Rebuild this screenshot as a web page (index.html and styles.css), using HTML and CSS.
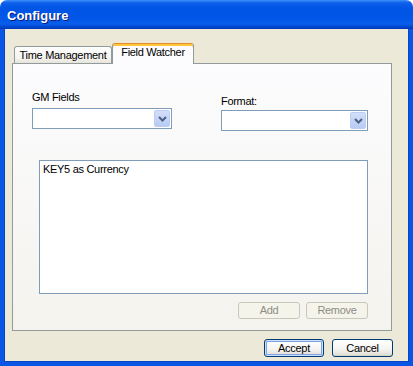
FILE: index.html
```html
<!DOCTYPE html>
<html lang="en">
<head>
  <meta charset="UTF-8" />
  <meta name="viewport" content="width=device-width, initial-scale=1.0" />
  <title>Configure</title>
  <link rel="stylesheet" href="styles.css">
</head>
<body>
  <div class="window">
    <div class="titlebar">Configure</div>
    <div class="client">
      <div class="tabs">
        <div class="tab">Time Management</div>
        <div class="tab tab-active">Field Watcher</div>
      </div>
      <div class="panel">
        <div class="fields">
          <div class="field field-gm">
            <label>GM Fields</label>
            <div class="combo">
              <span class="combo-value"></span>
              <span class="combo-btn">
                <svg width="9" height="6" viewBox="0 0 9 6"><path d="M1 1 L4.5 4.5 L8 1" fill="none" stroke="#4d6185" stroke-width="2"/></svg>
              </span>
            </div>
          </div>
          <div class="field field-format">
            <label>Format:</label>
            <div class="combo">
              <span class="combo-value"></span>
              <span class="combo-btn">
                <svg width="9" height="6" viewBox="0 0 9 6"><path d="M1 1 L4.5 4.5 L8 1" fill="none" stroke="#4d6185" stroke-width="2"/></svg>
              </span>
            </div>
          </div>
        </div>
        <div class="listbox">
          <div class="item">KEY5 as Currency</div>
        </div>
        <div class="list-actions">
          <button class="btn" disabled>Add</button>
          <button class="btn" disabled>Remove</button>
        </div>
      </div>
      <div class="dialog-actions">
        <button class="btn btn-default btn-accept">Accept</button>
        <button class="btn btn-cancel">Cancel</button>
      </div>
    </div>
  </div>
</body>
</html>
```

FILE: styles.css
```css
* {
  box-sizing: border-box;
}
body {
  margin: 0;
  background-color: #fff;
}
.window {
  width: 413px;
  height: 366px;
  font-family: "Liberation Sans", Arial, sans-serif;
  font-size: 11px;
  letter-spacing: -0.3px;
  color: #000;
}
.titlebar {
  height: 29px;
  padding: 3px 0 0 7px;
  line-height: 26px;
  border-radius: 7px 7px 0 0;
  background: linear-gradient(#3d8ef9 0, #0d5fe9 3px, #0055e5 8px, #0256e8 19px, #0a5eeb 24px, #0046cf 27px, #0038b4 29px);
  color: #fff;
  font-size: 13px;
  font-weight: bold;
  letter-spacing: 0;
  text-shadow: 1px 1px 0 #0a1a7a;
}
.client {
  height: 337px;
  padding: 14px 0 0 8px;
  background-color: #ece9d8;
  border: 4px solid #0a56e4;
  border-top: 0;
  box-shadow: inset 1px 0 0 #0843c8, inset -1px 0 0 #0843c8, inset 0 -1px 0 #0843c8;
  display: flex;
  flex-direction: column;
}
.tabs {
  display: flex;
  align-items: flex-end;
  height: 20px;
  margin-left: 2px;
}
.tab {
  width: 98px;
  height: 17px;
  padding-top: 2px;
  line-height: 13px;
  text-align: center;
  border: 1px solid #919b9c;
  border-bottom: 0;
  border-radius: 3px 3px 0 0;
  background: linear-gradient(#fefefe, #f4f3ee 70%, #e6e4da);
}
.tab-active {
  width: 82px;
  height: 21px;
  margin-bottom: -1px;
  padding-top: 2px;
  border-top: 1px solid #e68b2c;
  background: #fcfcfe;
  box-shadow: inset 0 2px 0 #ffc73c;
  position: relative;
  z-index: 1;
}
.panel {
  width: 380px;
  height: 268px;
  border: 1px solid #919b9c;
  background: linear-gradient(#fcfcfe, #f4f3ee);
}
.fields {
  display: flex;
  padding-left: 19px;
}
.field label {
  display: block;
  line-height: 13px;
}
.field-gm {
  width: 140px;
  padding-top: 27px;
}
.field-gm label {
  margin-bottom: 4px;
}
.field-format {
  width: 147px;
  margin-left: 49px;
  padding-top: 31px;
}
.field-format label {
  margin-bottom: 2px;
}
.combo {
  height: 21px;
  padding: 1px;
  display: flex;
  border: 1px solid #7f9db9;
  background-color: #fff;
}
.combo-value {
  flex: 1;
}
.combo-btn {
  width: 16px;
  height: 17px;
  display: flex;
  align-items: center;
  justify-content: center;
  border: 1px solid #bccdf4;
  border-radius: 2px;
  background: linear-gradient(#d3def9, #b8cbf5);
}
.listbox {
  width: 329px;
  height: 134px;
  margin: 29px 0 0 26px;
  padding: 2px 3px;
  line-height: 13px;
  border: 1px solid #7f9db9;
  background-color: #fff;
}
.list-actions {
  width: 329px;
  margin: 8px 0 0 26px;
  display: flex;
  justify-content: flex-end;
  gap: 6px;
}
.btn {
  height: 17px;
  width: 62px;
  padding: 0;
  font: inherit;
  letter-spacing: inherit;
  line-height: 15px;
  color: #000;
  border: 1px solid #003c74;
  border-radius: 3px;
  background: linear-gradient(#fff, #f3f3ef 60%, #e3e1d8 90%, #d6d0c5);
}
.btn:disabled {
  color: #8e8c83;
  border-color: #c9c7ba;
  background: #f5f4ea;
}
.dialog-actions {
  display: flex;
  justify-content: flex-end;
  gap: 8px;
  margin: 8px 16px 0 0;
}
.dialog-actions .btn {
  height: 18px;
  line-height: 16px;
}
.btn-accept {
  width: 60px;
}
.btn-cancel {
  width: 61px;
}
.btn-default {
  box-shadow: inset 0 0 0 1px #cee0fb, inset 0 0 0 2px #7ea3e6;
}
```
